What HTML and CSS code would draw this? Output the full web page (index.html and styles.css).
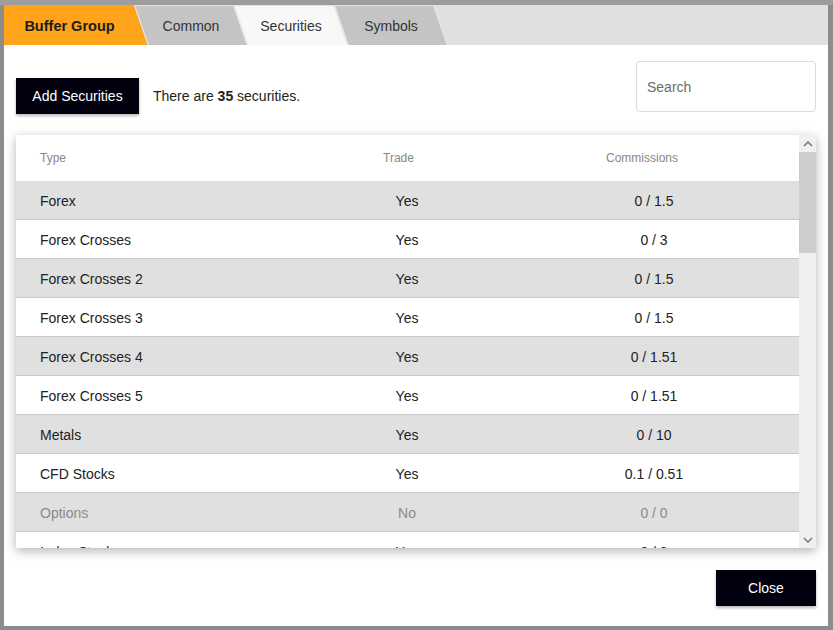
FILE: index.html
```html
<!DOCTYPE html>
<html>
<head>
<meta charset="utf-8">
<link rel="stylesheet" href="styles.css">
</head>
<body>
<div class="modal">
  <div class="tabs">
    <div class="tab tab-brand"><span>Buffer Group</span></div>
    <div class="tab"><span>Common</span></div>
    <div class="tab tab-active"><span>Securities</span></div>
    <div class="tab"><span>Symbols</span></div>
  </div>
  <div class="toolbar">
    <button class="btn btn-add">Add Securities</button>
    <div class="count">There are <b>35</b> securities.</div>
    <input class="search" type="text" placeholder="Search">
  </div>
  <div class="card">
    <div class="table">
      <div class="row head">
        <div class="cell c-type">Type</div>
        <div class="cell">Trade</div>
        <div class="cell">Commissions</div>
      </div>
      <div class="row alt"><div class="cell c-type">Forex</div><div class="cell"><span class="v-trade">Yes</span></div><div class="cell"><span class="v-comm">0 / 1.5</span></div></div>
      <div class="row"><div class="cell c-type">Forex Crosses</div><div class="cell"><span class="v-trade">Yes</span></div><div class="cell"><span class="v-comm">0 / 3</span></div></div>
      <div class="row alt"><div class="cell c-type">Forex Crosses 2</div><div class="cell"><span class="v-trade">Yes</span></div><div class="cell"><span class="v-comm">0 / 1.5</span></div></div>
      <div class="row"><div class="cell c-type">Forex Crosses 3</div><div class="cell"><span class="v-trade">Yes</span></div><div class="cell"><span class="v-comm">0 / 1.5</span></div></div>
      <div class="row alt"><div class="cell c-type">Forex Crosses 4</div><div class="cell"><span class="v-trade">Yes</span></div><div class="cell"><span class="v-comm">0 / 1.51</span></div></div>
      <div class="row"><div class="cell c-type">Forex Crosses 5</div><div class="cell"><span class="v-trade">Yes</span></div><div class="cell"><span class="v-comm">0 / 1.51</span></div></div>
      <div class="row alt"><div class="cell c-type">Metals</div><div class="cell"><span class="v-trade">Yes</span></div><div class="cell"><span class="v-comm">0 / 10</span></div></div>
      <div class="row"><div class="cell c-type">CFD Stocks</div><div class="cell"><span class="v-trade">Yes</span></div><div class="cell"><span class="v-comm">0.1 / 0.51</span></div></div>
      <div class="row alt disabled"><div class="cell c-type">Options</div><div class="cell"><span class="v-trade">No</span></div><div class="cell"><span class="v-comm">0 / 0</span></div></div>
      <div class="row"><div class="cell c-type">Index Stocks</div><div class="cell"><span class="v-trade">Yes</span></div><div class="cell"><span class="v-comm">0 / 3</span></div></div>
    </div>
    <div class="scrollbar">
      <div class="sb-arrow">
        <svg width="10" height="6" viewBox="0 0 10 6"><polyline points="1,5 5,1 9,5" fill="none" stroke="#7a7a7a" stroke-width="1.6"/></svg>
      </div>
      <div class="sb-track"><div class="sb-thumb"></div></div>
      <div class="sb-arrow">
        <svg width="10" height="6" viewBox="0 0 10 6"><polyline points="1,1 5,5 9,1" fill="none" stroke="#7a7a7a" stroke-width="1.6"/></svg>
      </div>
    </div>
  </div>
  <div class="footer">
    <button class="btn btn-close">Close</button>
  </div>
</div>
</body>
</html>
```
FILE: styles.css
```css
html, body {
  margin: 0;
  padding: 0;
}
body {
  background: #8c8c8c;
  font-family: "Liberation Sans", Arial, sans-serif;
  width: 833px;
  height: 630px;
  overflow: hidden;
  padding: 5px 0 0 4px;
  box-sizing: border-box;
  background-image: linear-gradient(#9d9d9d 0, #9d9d9d 5px, #8c8c8c 5px);
}
.modal {
  width: 824px;
  height: 621px;
  background: #fff;
  overflow: hidden;
  display: flex;
  flex-direction: column;
}
.tabs {
  height: 40px;
  background: #e0e0e0;
  display: flex;
  flex-shrink: 0;
  overflow: hidden;
}
.tab {
  position: relative;
  width: 100px;
  display: flex;
  align-items: center;
  justify-content: center;
  font-size: 14px;
  color: #333;
  padding-top: 2px;
  box-sizing: border-box;
}
.tab::before {
  content: "";
  position: absolute;
  top: 1px;
  bottom: 0;
  left: 0;
  right: 0;
  background: #c4c4c4;
  border-left: 1px solid #ececec;
  border-right: 1px solid #ececec;
  transform: skewX(19deg);
}
.tab span {
  position: relative;
}
.tab-brand {
  width: 137px;
  font-weight: bold;
  font-size: 14.5px;
  color: #1c1c1c;
  padding-right: 6px;
}
.tab-brand::before {
  top: 0;
  left: -30px;
  background: #ffa31a;
  border: none;
}
.tab-active::before {
  background: #f8f8f8;
}
.toolbar {
  display: flex;
  align-items: flex-start;
  height: 67px;
  box-sizing: border-box;
  padding: 16px 12px 0 12px;
  flex-shrink: 0;
}
.btn {
  border: none;
  background: #00000f;
  color: #fff;
  font-family: "Liberation Sans", Arial, sans-serif;
  font-size: 14px;
  height: 36px;
  box-shadow: 0 2px 3px rgba(0, 0, 0, 0.28);
  padding: 0;
}
.btn-add {
  width: 123px;
  margin-top: 17px;
}
.count {
  margin-left: 14px;
  margin-top: 17px;
  line-height: 36px;
  font-size: 14px;
  color: #222;
}
.search {
  margin-left: auto;
  width: 180px;
  height: 51px;
  box-sizing: border-box;
  border: 1px solid #dcdcdc;
  border-radius: 4px;
  padding: 0 10px;
  font-family: "Liberation Sans", Arial, sans-serif;
  font-size: 14px;
  outline: none;
}
.search::placeholder {
  color: #6b6b6b;
}
.card {
  margin: 23px 12px 0 12px;
  height: 413px;
  display: flex;
  box-shadow: 0 3px 10px rgba(0, 0, 0, 0.3);
  background: #fff;
  flex-shrink: 0;
  overflow: hidden;
}
.table {
  flex: 1;
  overflow: hidden;
}
.row {
  display: grid;
  grid-template-columns: 367px 223px 1fr;
  height: 39px;
  box-sizing: border-box;
  padding-top: 2px;
  border-bottom: 1px solid #c8c8c8;
  align-items: center;
  font-size: 14px;
  color: #222;
}
.row.head {
  height: 46px;
  padding-top: 0;
  border-bottom: none;
  font-size: 12px;
  color: #888;
}
.row.alt {
  background: #e0e0e0;
}
.row.disabled {
  color: #8a8a8a;
}
.c-type {
  padding-left: 24px;
}
.v-trade {
  display: inline-block;
  width: 48px;
  text-align: center;
}
.v-comm {
  display: inline-block;
  width: 96px;
  text-align: center;
}
.scrollbar {
  width: 17px;
  background: #f0f0f0;
  display: flex;
  flex-direction: column;
  flex-shrink: 0;
}
.sb-arrow {
  height: 17px;
  display: flex;
  align-items: center;
  justify-content: center;
}
.sb-track {
  flex: 1;
}
.sb-thumb {
  height: 101px;
  background: #cdcdcd;
}
.footer {
  display: flex;
  justify-content: flex-end;
  padding: 22px 12px 0 12px;
}
.btn-close {
  width: 100px;
}
```
